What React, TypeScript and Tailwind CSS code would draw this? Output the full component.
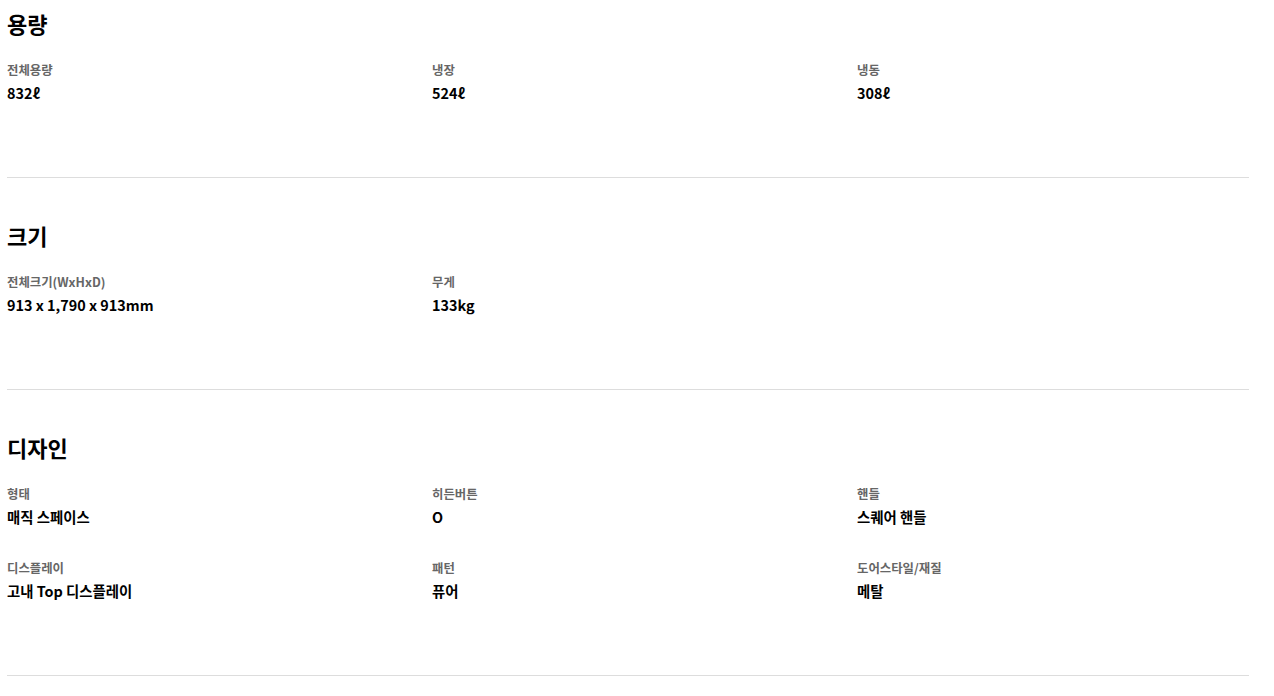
const sections = [
  {
    title: '용량',
    items: [
      { label: '전체용량', value: '832ℓ' },
      { label: '냉장', value: '524ℓ' },
      { label: '냉동', value: '308ℓ' },
    ],
  },
  {
    title: '크기',
    items: [
      { label: '전체크기(WxHxD)', value: '913 x 1,790 x 913mm' },
      { label: '무게', value: '133kg' },
    ],
  },
  {
    title: '디자인',
    items: [
      { label: '형태', value: '매직 스페이스' },
      { label: '히든버튼', value: 'O' },
      { label: '핸들', value: '스퀘어 핸들' },
      { label: '디스플레이', value: '고내 Top 디스플레이' },
      { label: '패턴', value: '퓨어' },
      { label: '도어스타일/재질', value: '메탈' },
    ],
  },
];

export default function App() {
  return (
    <div className="min-h-screen bg-white pl-[7px] pt-[7px] font-['Noto_Sans_CJK_KR','Noto_Sans',sans-serif] text-black">
      <div className="w-[1242px]">
        {sections.map((section, i) => (
          <section
            key={section.title}
            className={i === 0 ? 'border-b border-[#dddddd] pb-[73px]' : 'border-b border-[#dddddd] pb-[73px] pt-[41px]'}
          >
            <h2 className="text-[22px] font-bold leading-[32px]">{section.title}</h2>
            <dl className="mt-[21px] grid grid-cols-3 gap-x-[33px] gap-y-[30px]">
              {section.items.map((item) => (
                <div key={item.label}>
                  <dt className="text-[12.4px] font-bold leading-[20px] text-[#666666]">{item.label}</dt>
                  <dd className="mt-[2px] text-[14.4px] font-bold leading-[22px]">{item.value}</dd>
                </div>
              ))}
            </dl>
          </section>
        ))}
      </div>
    </div>
  );
}
